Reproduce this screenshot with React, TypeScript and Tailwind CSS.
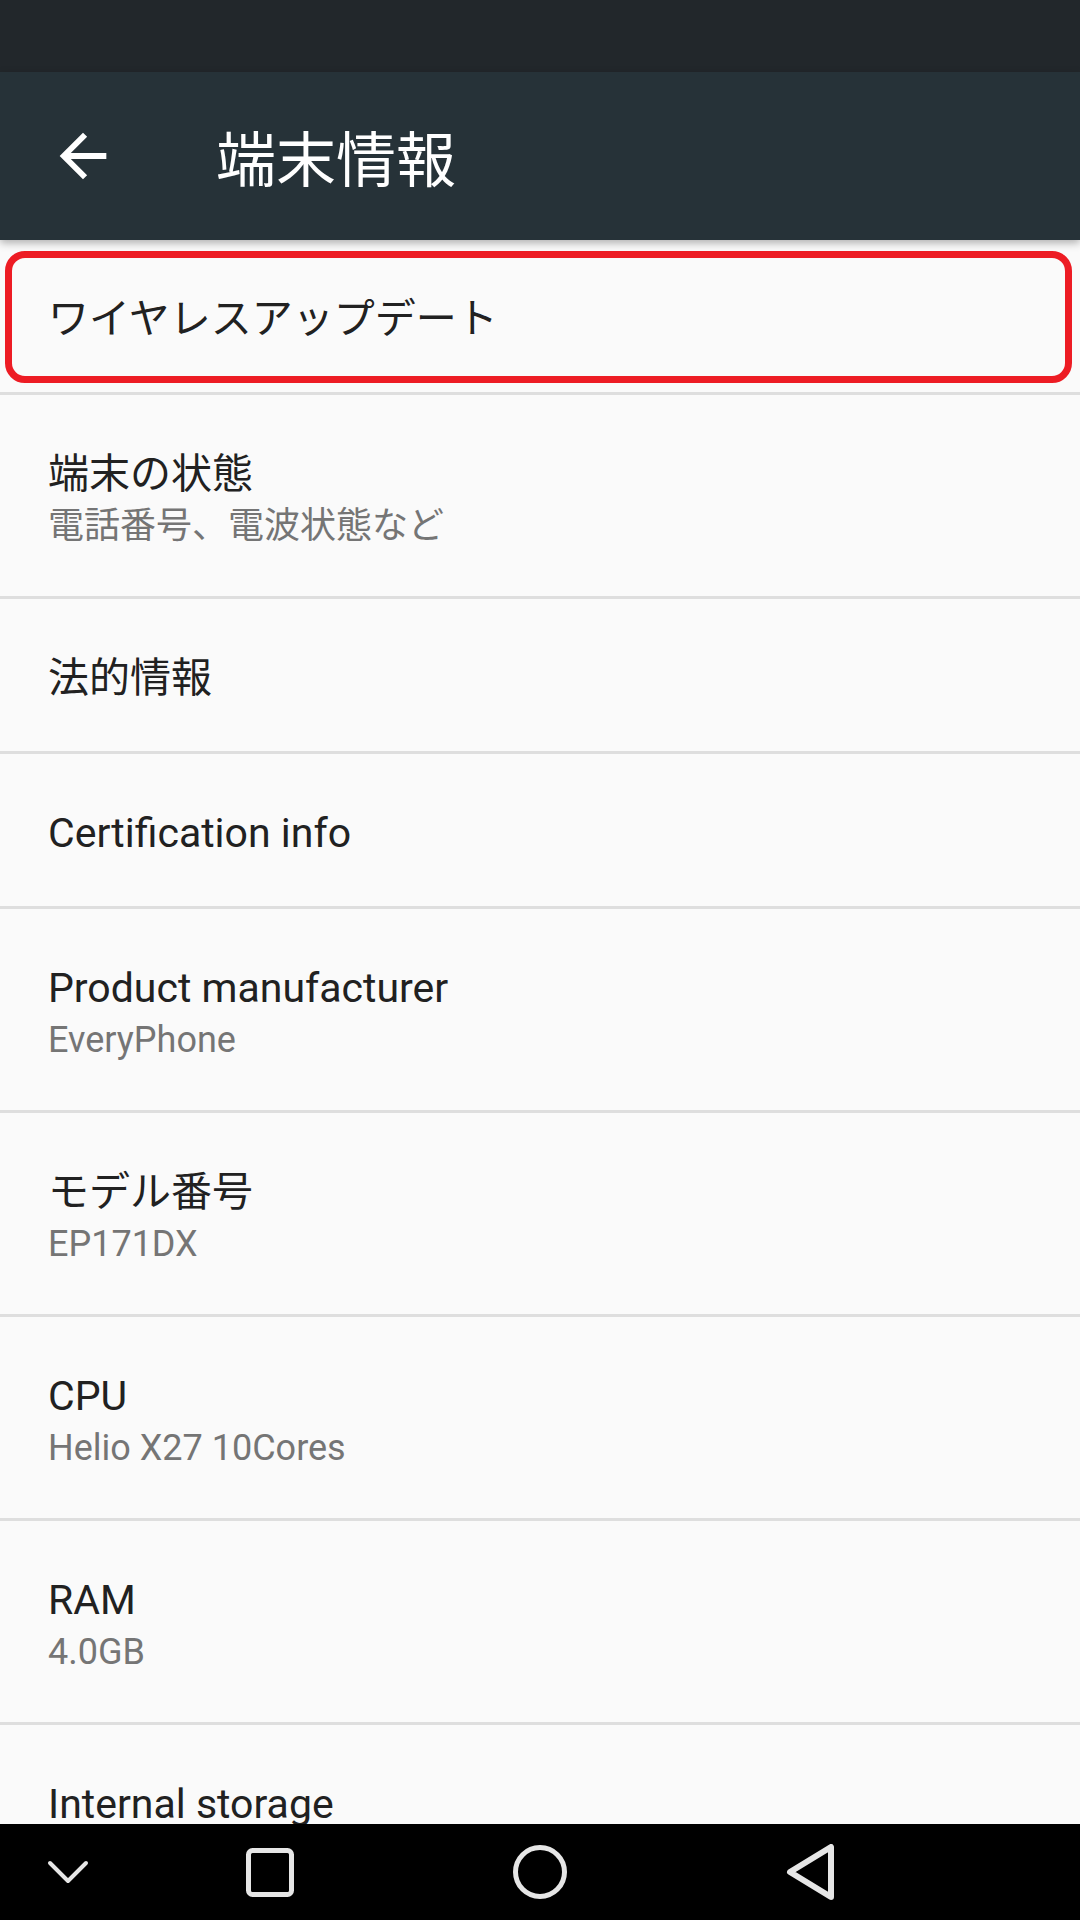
import React from "react";

type RowProps = {
  title: string;
  summary?: string;
  highlight?: boolean;
};

function Row(props: RowProps) {
  const { title, summary, highlight } = props;
  const height = summary ? "h-[204px]" : "h-[155px]";

  return (
    <div className={`relative ${height} shrink-0 border-b-[3px] border-[#dedede] flex flex-col justify-center pl-[48px] pt-[5px]`}>
      <div className="text-[41px] leading-[52px] text-[#212121]">{title}</div>
      {summary && (
        <div className="text-[36px] leading-[46px] mt-[3px] text-[#757575]">{summary}</div>
      )}
      {highlight && (
        <div className="absolute left-[5px] right-[8px] top-[11px] bottom-[9px] border-[7px] border-[#ed1c24] rounded-[20px]" />
      )}
    </div>
  );
}

function BackArrow() {
  return (
    <svg width="70" height="70" viewBox="0 0 24 24" fill="#ffffff">
      <path d="M20 11H7.83l5.59-5.59L12 4l-8 8 8 8 1.41-1.41L7.83 13H20v-2z" />
    </svg>
  );
}

function NavBar() {
  // Icons are a light gray outline on black
  const stroke = "#e6e6e6";
  return (
    <div className="h-[96px] shrink-0 bg-black flex items-center">
      <div className="w-[135px] flex justify-center">
        <svg width="42" height="24" viewBox="0 0 42 24">
          <path d="M3 3 L21 21 L39 3" fill="none" stroke={stroke} strokeWidth="4" strokeLinecap="round" strokeLinejoin="round" />
        </svg>
      </div>
      <div className="w-[270px] flex justify-center">
        <svg width="48" height="49" viewBox="0 0 48 49">
          <rect x="2.5" y="2.5" width="43" height="44" rx="4" fill="none" stroke={stroke} strokeWidth="5" />
        </svg>
      </div>
      <div className="w-[270px] flex justify-center">
        <svg width="54" height="54" viewBox="0 0 54 54">
          <circle cx="27" cy="27" r="24.5" fill="none" stroke={stroke} strokeWidth="5" />
        </svg>
      </div>
      <div className="w-[270px] flex justify-center">
        <svg width="48" height="56" viewBox="0 0 48 56">
          <path d="M4 28 L45 3 L45 53 Z" fill="none" stroke={stroke} strokeWidth="6" strokeLinejoin="round" />
        </svg>
      </div>
      <div className="w-[135px]" />
    </div>
  );
}

export default function App() {
  // last row's summary is hidden behind the nav bar in the screenshot
  const rows: RowProps[] = [
    { title: "ワイヤレスアップデート", highlight: true },
    { title: "端末の状態", summary: "電話番号、電波状態など" },
    { title: "法的情報" },
    { title: "Certification info" },
    { title: "Product manufacturer", summary: "EveryPhone" },
    { title: "モデル番号", summary: "EP171DX" },
    { title: "CPU", summary: "Helio X27 10Cores" },
    { title: "RAM", summary: "4.0GB" },
    { title: "Internal storage", summary: "\u00a0" },
  ];

  return (
    <div className="w-[1080px] h-[1920px] flex flex-col bg-[#fafafa] overflow-hidden font-['Roboto','Noto_Sans_CJK_JP',sans-serif]">
      <div className="h-[72px] shrink-0 bg-[#22272b]" />
      <div className="relative z-10 h-[168px] shrink-0 bg-[#263238] flex items-center shadow-[0_3px_8px_rgba(0,0,0,0.3)]">
        <div className="ml-[48px]">
          <BackArrow />
        </div>
        <div className="ml-[98px] text-[60px] leading-none text-white font-['Noto_Sans_CJK_JP',sans-serif]">端末情報</div>
      </div>
      <div className="flex-1 min-h-0 overflow-hidden flex flex-col">
        {rows.map((r) => (
          <Row key={r.title} {...r} />
        ))}
      </div>
      <NavBar />
    </div>
  );
}
